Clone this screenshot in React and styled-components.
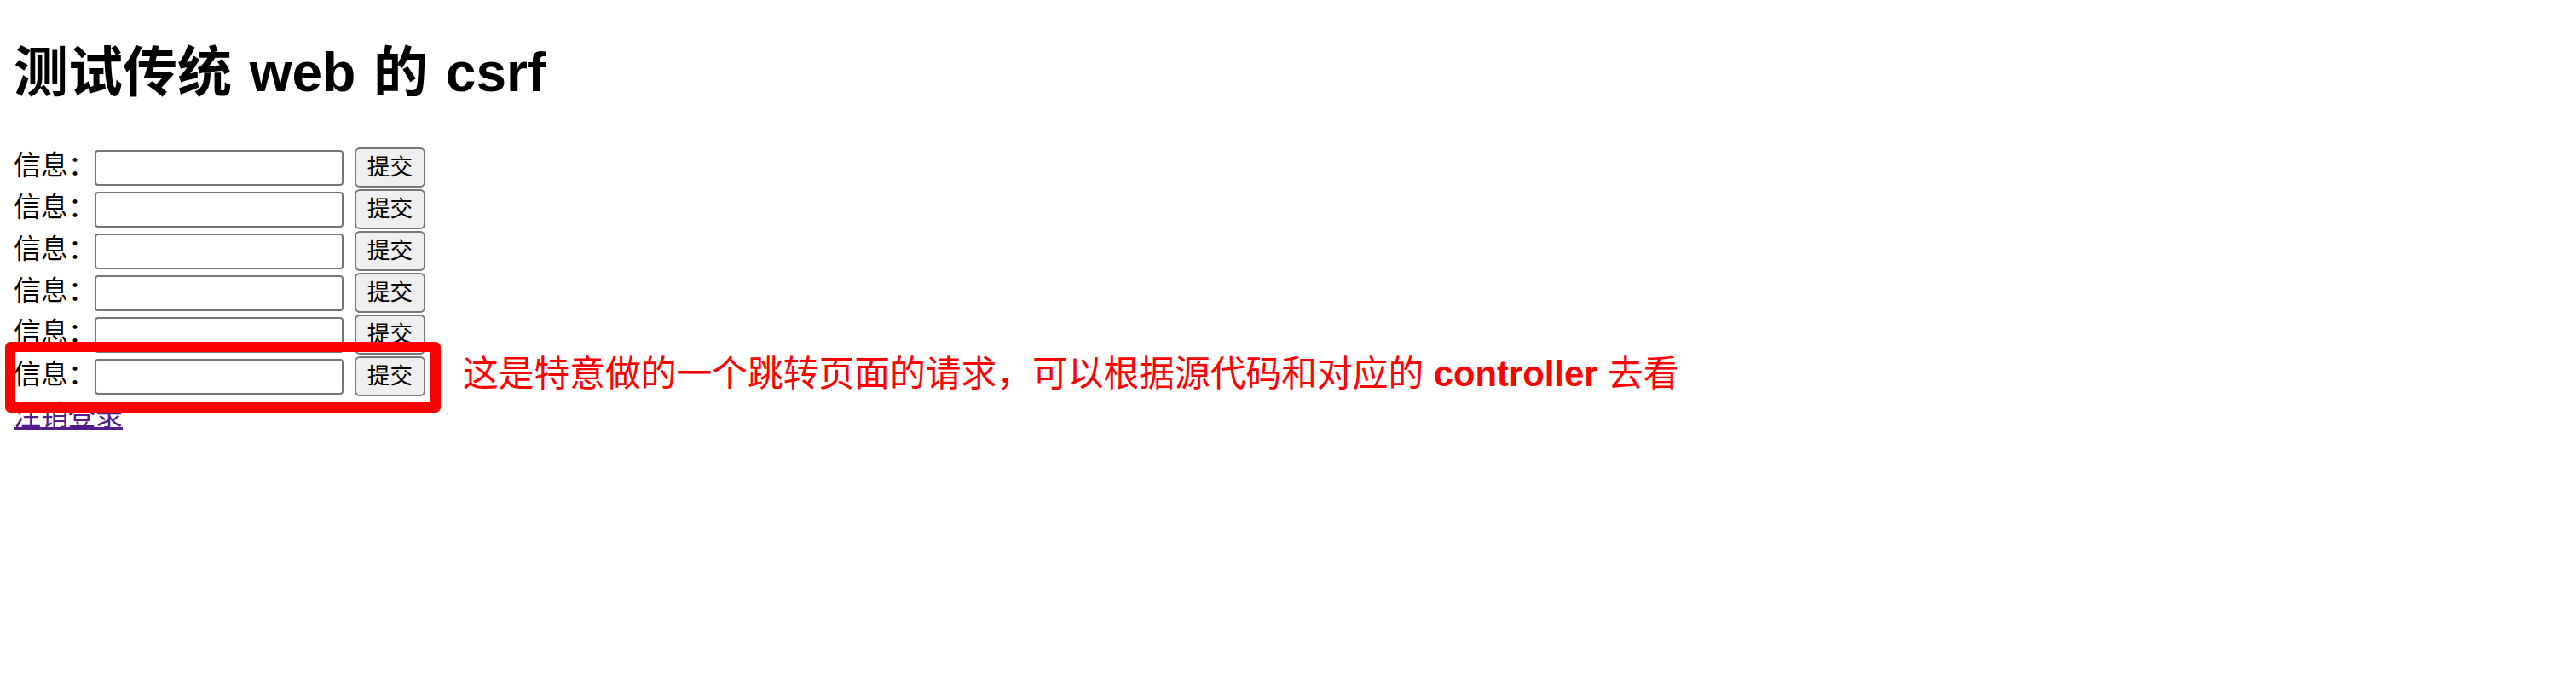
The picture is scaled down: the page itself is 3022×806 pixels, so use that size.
import React from "react";
import styled, { createGlobalStyle } from "styled-components";

const Global = createGlobalStyle`
  html, body {
    margin: 0;
    padding: 0;
    background: #ffffff;
  }
  body {
    font-family: "Liberation Sans", "Noto Sans CJK SC", sans-serif;
    color: #000000;
  }
`;

const Page = styled.main`
  padding: 16px;
`;

const Title = styled.h1`
  margin: 24px 0 0;
  font-size: 64px;
  line-height: 90px;
  font-weight: 700;
  word-spacing: 3px;
`;

const Form = styled.form`
  margin-top: 42px;
  display: flex;
  flex-direction: column;
`;

const Row = styled.div`
  position: relative;
  display: flex;
  align-items: flex-start;
  height: 49px;
`;

const Label = styled.span`
  font-size: 32px;
  line-height: 45px;
  white-space: nowrap;
`;

const Field = styled.input`
  box-sizing: border-box;
  width: 292px;
  height: 42px;
  margin: 4px 0 0 -1px;
  padding: 2px 4px;
  border: 2px solid #767676;
  border-radius: 4px;
  background: #ffffff;
  font: 26.67px "Liberation Sans", "Noto Sans CJK SC", sans-serif;
  outline: none;
`;

const Submit = styled.button`
  box-sizing: border-box;
  width: 83px;
  height: 47px;
  margin: 1px 0 0 13px;
  padding: 0;
  border: 2px solid #767676;
  border-radius: 6px;
  background: #efefef;
  color: #000000;
  font: 26.67px "Liberation Sans", "Noto Sans CJK SC", sans-serif;
  line-height: 43px;
`;

const Highlight = styled.div`
  position: absolute;
  left: -10px;
  top: -16px;
  width: 511px;
  height: 83px;
  box-sizing: border-box;
  border: 12px solid #ff0000;
  border-radius: 6px;
  pointer-events: none;
`;

const Note = styled.div`
  position: absolute;
  left: 527px;
  top: -3px;
  font-size: 41.75px;
  line-height: 50px;
  color: #ff0000;
  white-space: nowrap;
`;

const Strong = styled.b`
  font-weight: 700;
`;

const Logout = styled.a`
  display: inline-block;
  font-size: 32px;
  line-height: 45px;
  color: #551a8b;
  text-decoration: underline;
`;

const rows = [0, 1, 2, 3, 4, 5];

export default function App() {
  return (
    <>
      <Global />
      <Page>
        <Title>测试传统 web 的 csrf</Title>
        <Form onSubmit={(e) => e.preventDefault()}>
          {rows.map((i) => (
            <Row key={i}>
              <Label>信息：</Label>
              <Field type="text" />
              <Submit type="submit">提交</Submit>
              {i === rows.length - 1 && (
                <>
                  <Highlight />
                  <Note>
                    这是特意做的一个跳转页面的请求，可以根据源代码和对应的 <Strong>controller</Strong> 去看
                  </Note>
                </>
              )}
            </Row>
          ))}
        </Form>
        <Logout href="#logout">注销登录</Logout>
      </Page>
    </>
  );
}
